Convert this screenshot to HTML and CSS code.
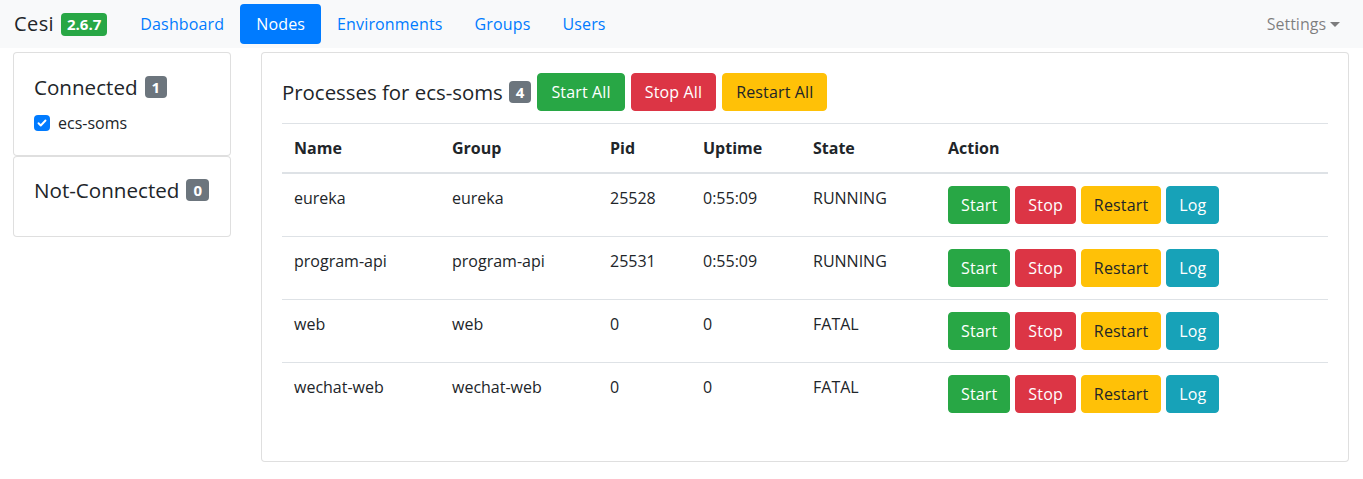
FILE: index.html
```html
<!DOCTYPE html>
<html>
<head>
<meta charset="utf-8">
<link rel="stylesheet" href="styles.css">
</head>
<body>
<nav class="navbar">
  <div class="brand">Cesi <span class="badge badge-green">2.6.7</span></div>
  <ul class="nav">
    <li><a class="nav-link">Dashboard</a></li>
    <li><a class="nav-link active">Nodes</a></li>
    <li><a class="nav-link">Environments</a></li>
    <li><a class="nav-link">Groups</a></li>
    <li><a class="nav-link">Users</a></li>
  </ul>
  <div class="settings">Settings<span class="caret"></span></div>
</nav>
<div class="layout">
  <aside class="side">
    <div class="card">
      <div class="card-body">
        <h5 class="card-title">Connected <span class="badge badge-gray">1</span></h5>
        <label class="check">
          <span class="box"><svg width="10" height="10" viewBox="0 0 8 8"><path d="M1.2 4.2 L3 6 L6.8 2" fill="none" stroke="#fff" stroke-width="1.5" stroke-linecap="round" stroke-linejoin="round"/></svg></span>
          <span class="check-label">ecs-soms</span>
        </label>
      </div>
    </div>
    <div class="card">
      <div class="card-body">
        <h5 class="card-title">Not-Connected <span class="badge badge-gray">0</span></h5>
      </div>
    </div>
  </aside>
  <main class="card main-card">
    <div class="card-body">
      <div class="proc-head">
        <h5 class="proc-title">Processes for ecs-soms <span class="badge badge-gray">4</span></h5>
        <button class="btn btn-success">Start All</button>
        <button class="btn btn-danger">Stop All</button>
        <button class="btn btn-warning">Restart All</button>
      </div>
      <table class="table">
        <thead>
          <tr><th class="c-name">Name</th><th class="c-group">Group</th><th class="c-pid">Pid</th><th class="c-up">Uptime</th><th class="c-state">State</th><th class="c-act">Action</th></tr>
        </thead>
        <tbody>
          <tr><td>eureka</td><td>eureka</td><td>25528</td><td>0:55:09</td><td>RUNNING</td><td class="actions"><button class="btn btn-success">Start</button><button class="btn btn-danger">Stop</button><button class="btn btn-warning">Restart</button><button class="btn btn-info">Log</button></td></tr>
          <tr><td>program-api</td><td>program-api</td><td>25531</td><td>0:55:09</td><td>RUNNING</td><td class="actions"><button class="btn btn-success">Start</button><button class="btn btn-danger">Stop</button><button class="btn btn-warning">Restart</button><button class="btn btn-info">Log</button></td></tr>
          <tr><td>web</td><td>web</td><td>0</td><td>0</td><td>FATAL</td><td class="actions"><button class="btn btn-success">Start</button><button class="btn btn-danger">Stop</button><button class="btn btn-warning">Restart</button><button class="btn btn-info">Log</button></td></tr>
          <tr><td>wechat-web</td><td>wechat-web</td><td>0</td><td>0</td><td>FATAL</td><td class="actions"><button class="btn btn-success">Start</button><button class="btn btn-danger">Stop</button><button class="btn btn-warning">Restart</button><button class="btn btn-info">Log</button></td></tr>
        </tbody>
      </table>
    </div>
  </main>
</div>
</body>
</html>
```
FILE: styles.css
```css
* { box-sizing: border-box; }
html, body { margin: 0; }
body {
  font-family: "Open Sans", "Noto Sans", sans-serif;
  font-size: 16px;
  line-height: 24px;
  color: #212529;
  background: #fff;
}
.navbar {
  background: #f8f9fa;
  height: 48px;
  display: flex;
  align-items: center;
  padding: 0 14px;
}
.brand {
  font-size: 20px;
  line-height: 30px;
  margin-right: 17px;
  display: flex;
  align-items: center;
  gap: 7px;
  letter-spacing: 0.4px;
}
.nav { list-style: none; margin: 0; padding: 0; display: flex; }
.nav-link {
  display: block;
  padding: 8px 16px;
  color: #007bff;
  border-radius: 4px;
  letter-spacing: 0.15px;
}
.nav-link.active { background: #007bff; color: #fff; }
.settings {
  margin-left: auto;
  color: rgba(0,0,0,.5);
  padding: 8px 9px 8px 0;
  display: flex;
  align-items: center;
}
.caret {
  display: inline-block;
  margin-left: 4px;
  border-top: 5px solid rgba(0,0,0,.5);
  border-left: 5px solid transparent;
  border-right: 5px solid transparent;
}
.badge {
  display: inline-block;
  font-weight: 700;
  border-radius: 4px;
  color: #fff;
  text-align: center;
  letter-spacing: 0;
}
.brand .badge { font-size: 15px; line-height: 23px; padding: 0 6px; }
.badge-green { background: #28a745; }
.badge-gray { background: #6c757d; font-size: 15px; line-height: 22px; padding: 0 7px; }
.layout {
  display: flex;
  gap: 30px;
  padding: 4px 14px 0 13px;
  align-items: flex-start;
}
.side { width: 218px; display: flex; flex-direction: column; }
.card {
  border: 1px solid rgba(0,0,0,.125);
  border-radius: 4px;
  background: #fff;
}
.card-body { padding: 20px; }
.card-title {
  margin: 0 0 8px;
  font-size: 20.6px;
  font-weight: 400;
  line-height: 28px;
  display: flex;
  align-items: center;
  gap: 7px;
}
.side .card:first-child .card-title { margin-bottom: 10px; }
.side .card:nth-child(2) .card-body { padding-top: 19px; padding-bottom: 24px; }
.check { display: flex; align-items: center; line-height: 24px; }
.box {
  width: 16px; height: 16px;
  background: #007bff;
  border-radius: 4px;
  display: inline-flex;
  align-items: center;
  justify-content: center;
  margin-right: 8px;
}
.check-label { font-size: 16px; }
.main-card { flex: 1; }
.proc-head { display: flex; align-items: center; gap: 6px; margin-bottom: 12px; }
.proc-title {
  margin: 0;
  font-size: 20.4px;
  font-weight: 400;
  line-height: 30px;
  display: flex;
  align-items: center;
  gap: 6px;
}
.btn {
  font-family: inherit;
  font-size: 16px;
  line-height: 24px;
  padding: 6px 12px;
  border: 1px solid transparent;
  border-radius: 4px;
  color: #fff;
  cursor: pointer;
  letter-spacing: 0.15px;
}
.proc-head .btn { padding: 6px 13px; }
.btn-success { background: #28a745; border-color: #28a745; }
.btn-danger { background: #dc3545; border-color: #dc3545; }
.btn-warning { background: #ffc107; border-color: #ffc107; color: #212529; }
.btn-info { background: #17a2b8; border-color: #17a2b8; }
.table {
  width: 100%;
  border-collapse: collapse;
  margin-bottom: 16px;
}
.table th, .table td {
  padding: 12px;
  text-align: left;
  vertical-align: top;
  border-top: 1px solid #dee2e6;
}
.table th { font-weight: 700; }
.table thead th { border-bottom: 2px solid #dee2e6; }
.c-name { width: 158px; }
.c-group { width: 158px; }
.c-pid { width: 93px; }
.c-up { width: 110px; }
.c-state { width: 135px; }
.actions { white-space: nowrap; }
.actions .btn { margin-right: 5px; vertical-align: top; }
```
